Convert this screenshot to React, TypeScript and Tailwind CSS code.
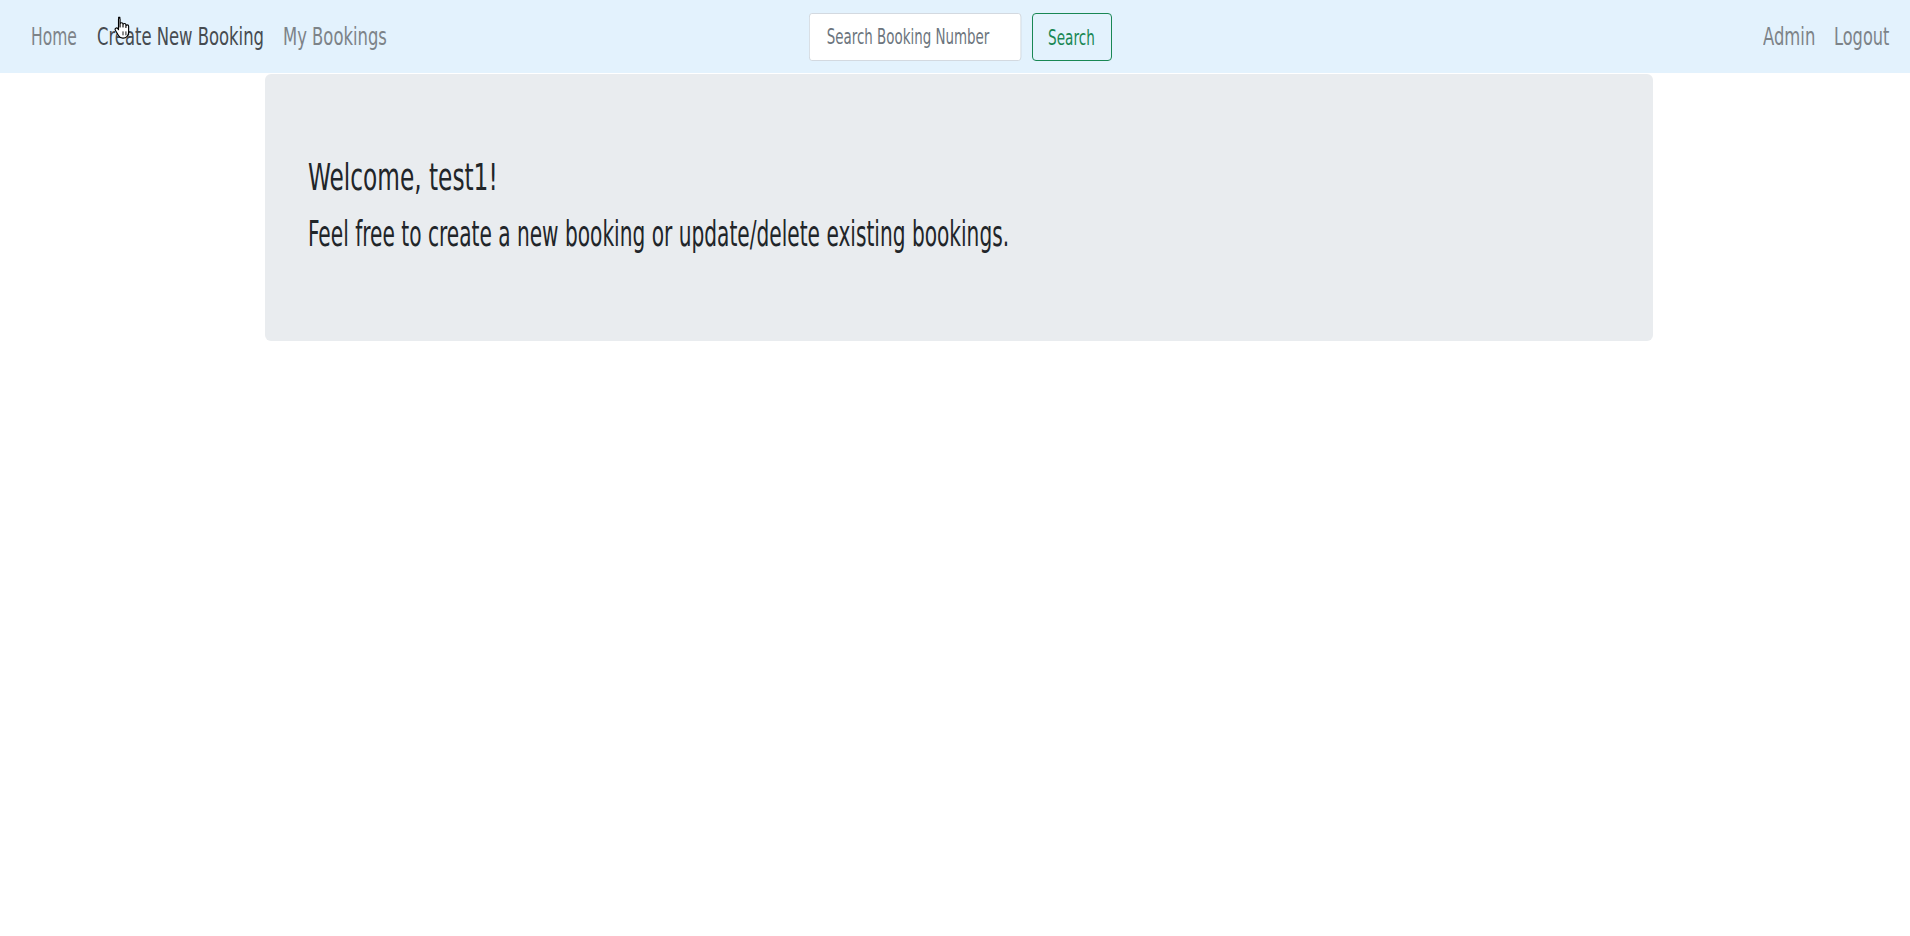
// The page font is a tall condensed face; DejaVu Sans Condensed narrowed with scale-x stands in for it.
const font = "font-['DejaVu_Sans_Condensed','DejaVu_Sans',sans-serif]";

interface NavLinkProps {
  label: string;
  width: string;
  squeeze: string;
  active?: boolean;
}

function NavLink({ label, width, squeeze, active }: NavLinkProps) {
  return (
    <a
      href="#"
      className={`${width} block shrink-0 whitespace-nowrap text-[25px] leading-none ${
        active ? "text-[#464b50]" : "text-[#7d8388]"
      }`}
    >
      <span className={`inline-block origin-left ${squeeze}`}>{label}</span>
    </a>
  );
}

function HandCursor() {
  return (
    <svg
      className="pointer-events-none absolute left-[114px] top-[15px]"
      width="18"
      height="26"
      viewBox="0 0 16 22"
    >
      <path
        d="M4 1.5c.8 0 1.4.6 1.4 1.4V10V7.6c0-.8.6-1.3 1.3-1.3s1.3.5 1.3 1.3V10V8.3c0-.8.6-1.3 1.3-1.3s1.3.5 1.3 1.3V10.5V9.4c0-.8.6-1.2 1.2-1.2s1.2.5 1.2 1.2v5.4c0 2.8-1.9 5.2-4.8 5.2H7.8c-1.7 0-3-.9-3.8-2.3L1.2 13c-.4-.7-.2-1.4.4-1.8.6-.4 1.4-.2 1.8.4l.6.9V2.9c0-.8.6-1.4 1.3-1.4z"
        fill="#fff"
        stroke="#000"
        strokeWidth="1"
        strokeLinejoin="round"
      />
      <path d="M8 14v3.5M10.6 14v3.5M13 14v3.5" stroke="#000" strokeWidth="0.8" />
    </svg>
  );
}

export default function App() {
  return (
    <div className={`min-h-screen bg-white ${font}`}>
      {/* Navbar */}
      <nav className="relative flex h-[73px] items-center bg-[#e3f2fd] pl-[31px] pr-[21px]">
        <div className="flex flex-1 items-center gap-[19px]">
          <NavLink label="Home" width="w-[47px]" squeeze="scale-x-[0.69]" />
          <NavLink label="Create New Booking" width="w-[167px]" squeeze="scale-x-[0.73]" active />
          <NavLink label="My Bookings" width="w-[104px]" squeeze="scale-x-[0.73]" />
        </div>

        <form className="flex items-center gap-[11px]" onSubmit={(e) => e.preventDefault()}>
          <div className="w-[212px] shrink-0">
            <input
              type="text"
              placeholder="Search Booking Number"
              className="block h-[48px] w-[299px] origin-left scale-x-[0.71] rounded-[4px] border border-[#ced4da] bg-white pl-[24px] pr-[16px] pt-[1px] text-[21px] text-[#212529] outline-none placeholder:text-[#6c757d]"
            />
          </div>
          <button
            type="submit"
            className="flex h-[48px] w-[80px] shrink-0 items-center justify-center rounded-[4px] border border-[#198754] pt-[4px] text-[21px] leading-none text-[#198754]"
          >
            <span className="inline-block scale-x-[0.72] whitespace-nowrap">Search</span>
          </button>
        </form>

        <div className="flex flex-1 items-center justify-end gap-[19px]">
          <NavLink label="Admin" width="w-[52px]" squeeze="scale-x-[0.73]" />
          <NavLink label="Logout" width="w-[55px]" squeeze="scale-x-[0.72]" />
        </div>

        <HandCursor />
      </nav>

      {/* Jumbotron */}
      <main className="ml-[265px] mt-px w-[1388px]">
        <section className="h-[267px] rounded-[6px] bg-[#e9ecef] pl-[43px] pt-[84px] text-[#212529]">
          <h1 className="whitespace-nowrap text-[38px] font-normal leading-none">
            <span className="inline-block origin-left scale-x-[0.68]">Welcome, test1!</span>
          </h1>
          <p className="mt-[21px] whitespace-nowrap text-[35px] leading-none">
            <span className="inline-block origin-left scale-x-[0.64]">
              Feel free to create a new booking or update/delete existing bookings.
            </span>
          </p>
        </section>
      </main>
    </div>
  );
}
